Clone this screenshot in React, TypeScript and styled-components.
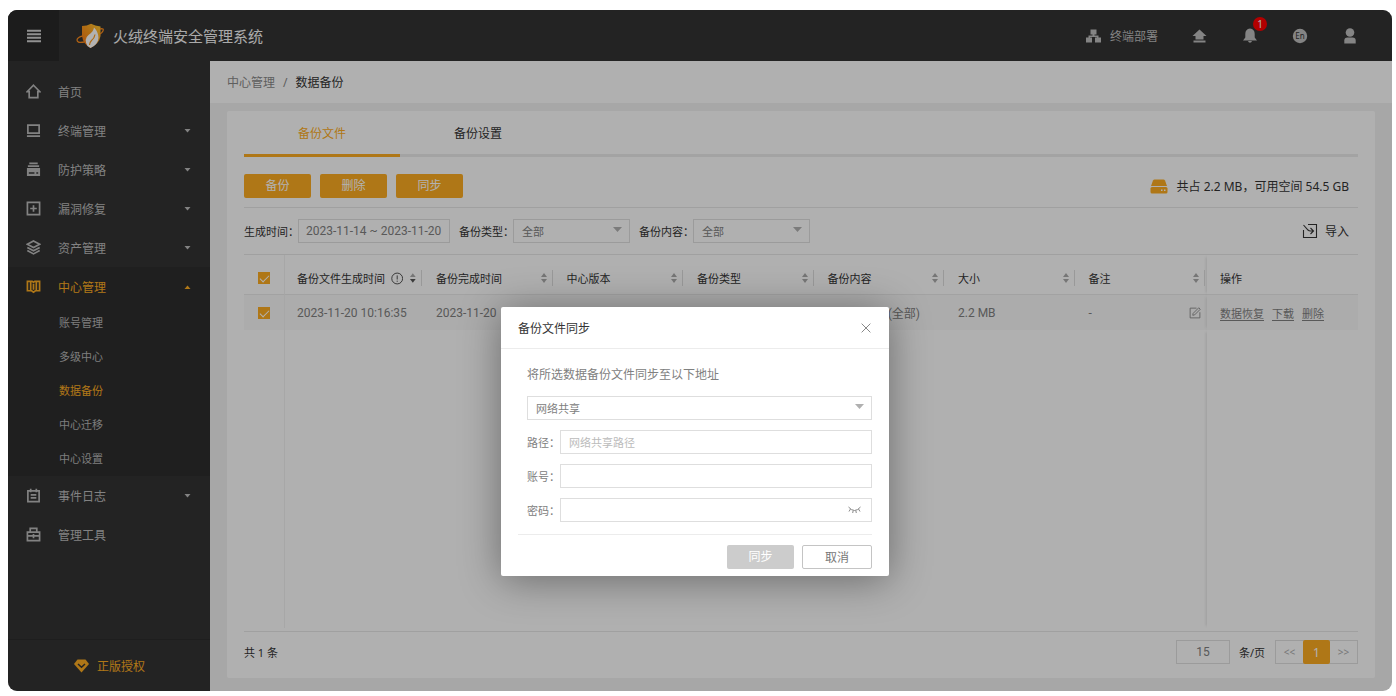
import React from "react";
import styled, { createGlobalStyle } from "styled-components";

const orange = "#fbab22";
const family = '"Noto Sans", "Noto Sans CJK SC", sans-serif';
const dataFamily = 'Roboto, "Noto Sans CJK SC", sans-serif';

const Global = createGlobalStyle`
  * { box-sizing: border-box; }
  body { margin: 0; background: #fff; font-family: ${family}; font-size: 12px; color: #333; }
  button, input, select { font-family: inherit; font-size: 12px; margin: 0; }
  button { cursor: pointer; }
  ul { list-style: none; margin: 0; padding: 0; }
`;

/* ---------- shell ---------- */
const Frame = styled.div`
  position: relative;
  display: flex;
  flex-direction: column;
  height: calc(100vh - 15px);
  min-height: 600px;
  margin: 10px 4px 5px 8px;
  border-radius: 9px;
  overflow: hidden;
  background: #f0f0f0;
`;
const Header = styled.header`
  display: flex;
  align-items: center;
  height: 51px;
  flex: none;
  background: #333;
  color: #c8c8c8;
`;
const MenuToggle = styled.button`
  width: 51px;
  height: 51px;
  border: 0;
  padding: 0;
  background: #292929;
  color: #d0d0d0;
  display: grid;
  place-items: center;
`;
const Brand = styled.div`
  display: flex;
  align-items: center;
  gap: 9px;
  margin-left: 17px;
  flex: 1;
  font-size: 15px;
  color: #f4f4f4;
`;
const HeaderActions = styled.nav`
  display: flex;
  align-items: center;
  gap: 34px;
  padding-right: 34px;
`;
const HeaderButton = styled.button`
  position: relative;
  display: flex;
  align-items: center;
  gap: 9px;
  min-width: 16px;
  border: 0;
  padding: 0;
  background: none;
  color: #bdbdbd;
`;
const Badge = styled.span`
  position: absolute;
  left: 11px;
  top: -11px;
  width: 14px;
  height: 14px;
  border-radius: 7px;
  background: #ff0000;
  color: #fff;
  font-size: 10px;
  line-height: 14px;
  text-align: center;
`;
const Body = styled.div`
  display: flex;
  flex: 1;
  min-height: 0;
`;

/* ---------- sidebar ---------- */
const Sidebar = styled.aside`
  display: flex;
  flex-direction: column;
  width: 202px;
  flex: none;
  background: #333;
`;
const MenuList = styled.ul`
  flex: 1;
  && { padding-top: 11px; }
`;
const MenuGroup = styled.li<{ $open?: boolean }>`
  background: ${(p) => (p.$open ? "#2d2d2d" : "transparent")};
`;
const MenuButton = styled.button<{ $active?: boolean }>`
  display: flex;
  align-items: center;
  gap: 17px;
  width: 100%;
  height: 39px;
  border: 0;
  padding: 0 19px 0 18px;
  background: none;
  text-align: left;
  color: ${(p) => (p.$active ? orange : "#bbb")};
`;
const MenuLabel = styled.span`
  flex: 1;
`;
const SubLink = styled.a<{ $active?: boolean }>`
  display: block;
  height: 34px;
  line-height: 34px;
  padding-left: 51px;
  font-size: 11px;
  text-decoration: none;
  color: ${(p) => (p.$active ? orange : "#b4b4b4")};
`;
const License = styled.button`
  display: flex;
  align-items: center;
  gap: 8px;
  height: 52px;
  border: 0;
  border-top: 1px solid #2b2b2b;
  padding: 0 0 0 66px;
  background: none;
  color: ${orange};
`;

/* ---------- content ---------- */
const Main = styled.main`
  display: flex;
  flex-direction: column;
  flex: 1;
  min-width: 0;
`;
const Crumbs = styled.nav`
  display: flex;
  align-items: center;
  gap: 8px;
  height: 42px;
  padding-left: 17px;
  background: #fdfdfd;
  color: #888;
`;
const CrumbLink = styled.a`
  color: inherit;
  text-decoration: none;
`;
const Current = styled.span`
  color: #333;
`;
const Card = styled.section`
  display: flex;
  flex-direction: column;
  flex: 1;
  min-height: 0;
  margin: 8px 17px 13px;
  padding: 0 17px;
  border-radius: 2px;
  background: #fdfdfd;
`;
const Tabs = styled.div`
  display: flex;
  height: 46px;
  flex: none;
  box-shadow: inset 0 -3px #eaeaea;
`;
const Tab = styled.button<{ $active?: boolean }>`
  width: 156px;
  border: 0;
  border-bottom: 3px solid ${(p) => (p.$active ? orange : "transparent")};
  padding: 0;
  background: none;
  color: ${(p) => (p.$active ? orange : "#333")};
`;
const Toolbar = styled.div`
  display: flex;
  align-items: center;
  gap: 9px;
  padding: 17px 9px 9px 0;
  border-bottom: 1px solid #e6e6e6;
`;
const Button = styled.button<{ $kind?: "plain" | "muted" }>`
  width: ${(p) => (p.$kind === "plain" ? 70 : 67)}px;
  height: 24px;
  border: ${(p) => (p.$kind === "plain" ? "1px solid #c4c4c4" : "0")};
  border-radius: 2px;
  padding: 0;
  line-height: 24px;
  background: ${(p) => (p.$kind === "plain" ? "#fff" : p.$kind === "muted" ? "#ccc" : orange)};
  color: ${(p) => (p.$kind === "plain" ? "#777" : "#fff")};
`;
const Usage = styled.div`
  display: flex;
  align-items: center;
  gap: 9px;
  margin-left: auto;
`;
const Filters = styled.div`
  display: flex;
  align-items: center;
  height: 47px;
  flex: none;
  padding-right: 9px;
  border-bottom: 1px solid #e6e6e6;
`;
const FilterLabel = styled.label`
  width: 54px;
  font-size: 11px;
  white-space: nowrap;
`;
const TextBox = styled.input`
  width: 100%;
  height: 24px;
  border: 1px solid #dedede;
  border-radius: 0;
  padding: 0 8px;
  background: transparent;
  color: #808080;
  outline: 0;
  &::placeholder { color: #bbb; font-size: 11px; }
`;
const DateBox = styled(TextBox)`
  width: 152px;
  padding: 0 7px;
  margin-right: 9px;
  font-family: ${dataFamily};
`;
const SelectWrap = styled.div<{ $width?: number }>`
  position: relative;
  width: ${(p) => (p.$width ? p.$width + "px" : "100%")};
  margin-right: ${(p) => (p.$width ? 9 : 0)}px;
  svg {
    position: absolute;
    right: 8px;
    top: 8px;
    pointer-events: none;
  }
`;
const Select = styled.select`
  appearance: none;
  display: block;
  width: 100%;
  height: 24px;
  border: 1px solid #dedede;
  border-radius: 0;
  padding: 0 8px;
  background: transparent;
  color: #808080;
  font-size: 11px;
  outline: 0;
`;
const ImportButton = styled.button`
  display: flex;
  align-items: center;
  gap: 7px;
  margin-left: auto;
  border: 0;
  padding: 0;
  background: none;
  color: #333;
`;

/* ---------- table ---------- */
const TableArea = styled.div`
  flex: 1 1 0;
  min-height: 0;
  padding-bottom: 3px;
`;
const Table = styled.table`
  width: 100%;
  height: 100%;
  table-layout: fixed;
  border-collapse: separate;
  border-spacing: 0;
  text-align: left;
  th, td { padding: 0 0 0 12px; font-weight: 400; }
  th:first-child, td:first-child { padding-left: 14px; border-right: 1px solid #f0f0f0; }
  th:last-child, td:last-child { padding-left: 13px; box-shadow: -3px 0 3px -2px #e0e0e0; }
`;
const HeadRow = styled.tr`
  height: 40px;
  font-size: 11px;
  && th { padding-top: 7px; border-bottom: 1px solid #e8e8e8; }
`;
const DataRow = styled.tr`
  height: 35px;
  color: #808080;
  font-family: ${dataFamily};
  td { background: #f7f7f7; white-space: nowrap; }
`;
const HeadCell = styled.div`
  display: flex;
  align-items: center;
  gap: 6px;
  height: 16px;
  margin-right: 2px;
  padding-right: 4px;
  border-right: 1px solid #dcdcdc;
  white-space: nowrap;
  svg:last-child { margin-left: auto; }
`;
const Check = styled.input`
  appearance: none;
  display: block;
  width: 12px;
  height: 12px;
  background: ${orange};
  &::after {
    content: "";
    display: block;
    width: 8px;
    height: 4px;
    margin: 3px 2px;
    border: solid #fff;
    border-width: 0 0 1px 1px;
    transform: rotate(-45deg);
  }
`;
const RemarkCell = styled.div`
  display: flex;
  align-items: center;
  justify-content: space-between;
  padding-right: 6px;
`;
const EndText = styled.div`
  text-align: right;
  padding-right: 26px;
`;
const IconButton = styled.button`
  display: block;
  border: 0;
  padding: 0;
  background: none;
  color: #888;
  line-height: 0;
`;
const RowLinks = styled.div`
  display: flex;
  gap: 8px;
  font-size: 11px;
  a { color: #808080; text-underline-offset: 2px; }
`;
const Footer = styled.footer`
  display: flex;
  align-items: center;
  height: 47px;
  flex: none;
  padding: 0 0 6px;
  border-top: 1px solid #e6e6e6;
  font-size: 11px;
`;
const PageSize = styled.label`
  display: flex;
  align-items: center;
  gap: 9px;
  margin-left: auto;
  margin-right: 10px;
`;
const SizeInput = styled(TextBox)`
  width: 54px;
  text-align: center;
  font-family: ${dataFamily};
`;
const Pager = styled.div`
  display: flex;
  height: 24px;
  border: 1px solid #dedede;
`;
const PageButton = styled.button<{ $active?: boolean }>`
  width: 27px;
  height: 24px;
  margin-top: -1px;
  border: 0;
  border-radius: ${(p) => (p.$active ? 2 : 0)}px;
  padding: 0;
  background: ${(p) => (p.$active ? orange : "transparent")};
  color: ${(p) => (p.$active ? "#fff" : "#aaa")};
  font-size: ${(p) => (p.$active ? 12 : 10)}px;
`;

/* ---------- dialog ---------- */
const Overlay = styled.div`
  position: absolute;
  inset: 0;
  display: flex;
  justify-content: center;
  align-items: flex-end;
  padding: 0 10px 115px 0;
  background: rgba(0, 0, 0, 0.3);
`;
const Dialog = styled.form`
  width: 388px;
  border-radius: 2px;
  background: #fff;
  box-shadow: 0 4px 40px rgba(0, 0, 0, 0.4);
`;
const DialogHead = styled.div`
  display: flex;
  align-items: center;
  justify-content: space-between;
  height: 42px;
  padding: 0 18px 0 17px;
  border-bottom: 1px solid #ececec;
`;
const DialogTitle = styled.h2`
  margin: 0;
  font-size: 12px;
  font-weight: 400;
`;
const DialogBody = styled.div`
  display: flex;
  flex-direction: column;
  gap: 10px;
  padding: 16px 17px 12px 26px;
  color: #808080;
`;
const Hint = styled.label`
  line-height: 20px;
  padding-bottom: 1px;
`;
const Field = styled.div`
  display: grid;
  grid-template-columns: 33px 1fr;
  align-items: center;
`;
const FieldLabel = styled.label`
  font-size: 11px;
`;
const PasswordWrap = styled.div`
  position: relative;
`;
const Eye = styled(IconButton)`
  position: absolute;
  right: 11px;
  top: 8px;
`;
const DialogFoot = styled.div`
  display: flex;
  justify-content: flex-end;
  gap: 8px;
  margin: 0 17px;
  padding: 10px 0 7px;
  border-top: 1px solid #ececec;
`;

/* ---------- icons ---------- */
const Line = ({ children, size = 15, w = 1.8 }: { children: React.ReactNode; size?: number; w?: number }) => (
  <svg width={size} height={size} viewBox="0 0 16 16" fill="none" stroke="currentColor" strokeWidth={w} aria-hidden="true">
    {children}
  </svg>
);

const menuIcons: Record<string, React.ReactNode> = {
  home: <path d="M8 1.300 L14.800 8.200 H12.600 V14.600 H3.400 V8.200 H1.200 Z" />,
  screen: <path d="M2 2.300 H14 V10.700 H2 Z M1 14 H15" />,
  policy: (
    <>
      <path d="M3.500 1.500 H12.500 M2 4.300 H14" />
      <path d="M1 6.500 H15 V14.800 H1 Z M3 11 V12.600 H9 V11 Z M11 11 V12.600 H13 V11 Z" fill="currentColor" fillRule="evenodd" stroke="none" />
    </>
  ),
  patch: <path d="M1.500 1.500 H14.500 V14.500 H1.500 Z M8 4.500 V11.500 M4.500 8 H11.500" />,
  layers: <path d="M8 1 L14.600 4.500 L8 8 L1.400 4.500 Z M1.400 8 L8 11.500 L14.600 8 M1.400 11.300 L8 14.800 L14.600 11.300" />,
  book: <path d="M1.500 2.500 H6.500 L8 3.500 L9.500 2.500 H14.500 V12.500 H10 L8 14 L6 12.500 H1.500 Z M8 5 V11.500 M5 2.500 V12.500 M11 2.500 V12.500" />,
  log: <path d="M2 3 H14 V14.500 H2 Z M5 0.800 V4.500 M11 0.800 V4.500 M5 7.300 H11 M5 10.500 H11" />,
  tools: <path d="M1.500 5.500 H14.500 V14.500 H1.500 Z M4.500 5 V1.500 H11.500 V5 M1.500 9.500 H14.500 M8 7.500 V12" />,
};

const Caret = ({ up }: { up?: boolean }) => (
  <svg width="7" height="4" viewBox="0 0 7 4" aria-hidden="true">
    <path d={up ? "M0.500 4 L3.500 0.500 L6.500 4Z" : "M0.500 0 L3.500 3.500 L6.500 0Z"} fill="currentColor" />
  </svg>
);
const SelectArrow = () => (
  <svg width="9" height="5" viewBox="0 0 9 5" aria-hidden="true">
    <path d="M0 0 H9 L4.500 5Z" fill="#b0b0b0" />
  </svg>
);
const Sort = ({ down }: { down?: boolean }) => (
  <svg width="8" height="12" viewBox="0 0 8 12" aria-hidden="true">
    <path d="M1 5 L4 1 L7 5Z" fill="#aaa" />
    <path d="M1 7 L4 11 L7 7Z" fill={down ? "#555" : "#aaa"} />
  </svg>
);
const Logo = () => (
  <svg width="28" height="26" viewBox="0 0 28 26" aria-hidden="true">
    <defs>
      <linearGradient id="shield" x1="0" y1="1" x2="1" y2="0">
        <stop offset="0" stopColor="#f4711a" />
        <stop offset="0.500" stopColor="#fd9b1c" />
        <stop offset="1" stopColor="#ffcc33" />
      </linearGradient>
    </defs>
    <path d="M6 3 Q11 3 15 0.800 Q19 3 24.500 3.500 V13 Q23.500 20.500 14.500 25 Q7 21 6 13 Z" fill="url(#shield)" />
    <path d="M7 12.800 Q1.200 14.200 1 17 Q1 20.500 8.500 19 M24 6 Q28.500 5 26.800 8.200 Q26.200 9.500 24 11" fill="none" stroke="#f98a1c" strokeWidth="1.300" />
    <path d="M18 4.500 Q17.500 8.500 12.500 12 Q7.500 16 11.500 23 L14.500 25 Q22 21.500 22.500 15 Q22.500 9 18 4.500Z" fill="#fff" />
    <path d="M19 11.500 Q18.500 15 15.500 17.500 Q13.500 19.500 13.500 22" fill="none" stroke="#fd9b1c" strokeWidth="1.200" />
  </svg>
);

type MenuItem = { label: string; icon: string; caret?: boolean; children?: string[] };
const menu: MenuItem[] = [
  { label: "首页", icon: "home" },
  { label: "终端管理", icon: "screen", caret: true },
  { label: "防护策略", icon: "policy", caret: true },
  { label: "漏洞修复", icon: "patch", caret: true },
  { label: "资产管理", icon: "layers", caret: true },
  { label: "中心管理", icon: "book", caret: true, children: ["账号管理", "多级中心", "数据备份", "中心迁移", "中心设置"] },
  { label: "事件日志", icon: "log", caret: true },
  { label: "管理工具", icon: "tools" },
];
const columns = ["备份完成时间", "中心版本", "备份类型", "备份内容", "大小", "备注"];

export default function App() {
  return (
    <>
      <Global />
      <Frame>
        <Header>
          <MenuToggle aria-label="菜单">
            <Line size={14} w={2.4}><path d="M0 2 H16 M0 6 H16 M0 10 H16 M0 14 H16" /></Line>
          </MenuToggle>
          <Brand><Logo />火绒终端安全管理系统</Brand>
          <HeaderActions>
            <HeaderButton>
              <svg width="15" height="14" viewBox="0 0 15 14" fill="currentColor" aria-hidden="true">
                <path d="M4.500 0.500 H10.500 V5.500 H8.500 V6.500 H12.500 V8.500 H15 V13.500 H9 V8.500 H10.800 V8 H4.200 V8.500 H6 V13.500 H0 V8.500 H2.500 V6.500 H6.500 V5.500 H4.500Z" />
              </svg>
              终端部署
            </HeaderButton>
            <HeaderButton aria-label="升级">
              <svg width="15" height="14" viewBox="0 0 15 14" fill="currentColor" aria-hidden="true">
                <path d="M7.500 0.500 L14.500 7 H11.500 V10.500 H3.500 V7 H0.500Z M1.500 11.500 H13.500 V13.500 H1.500Z" />
              </svg>
            </HeaderButton>
            <HeaderButton aria-label="通知">
              <svg width="16" height="15" viewBox="0 0 16 15" fill="currentColor" aria-hidden="true">
                <path d="M8 0.500 Q12.700 1 12.700 6 V9.500 L15 12.500 H1 L3.300 9.500 V6 Q3.300 1 8 0.500Z M6 13 H10 Q9.500 14.800 8 14.800 Q6.500 14.800 6 13Z" />
              </svg>
              <Badge>1</Badge>
            </HeaderButton>
            <HeaderButton aria-label="语言">
              <svg width="16" height="16" viewBox="0 0 16 16" aria-hidden="true">
                <circle cx="8" cy="8" r="7.200" fill="currentColor" />
                <text x="8" y="11" textAnchor="middle" fontSize="8" fill="#333">En</text>
              </svg>
            </HeaderButton>
            <HeaderButton aria-label="用户">
              <svg width="16" height="16" viewBox="0 0 16 16" fill="currentColor" aria-hidden="true">
                <circle cx="8" cy="4.500" r="4.300" />
                <path d="M2.300 15.500 V12.500 Q2.300 9.500 5.500 9.500 H10.500 Q13.700 9.500 13.700 12.500 V15.500Z" />
              </svg>
            </HeaderButton>
          </HeaderActions>
        </Header>
        <Body>
          <Sidebar>
            <MenuList>
              {menu.map((m) => (
                <MenuGroup key={m.label} $open={!!m.children}>
                  <MenuButton $active={!!m.children}>
                    <Line>{menuIcons[m.icon]}</Line>
                    <MenuLabel>{m.label}</MenuLabel>
                    {m.caret && <Caret up={!!m.children} />}
                  </MenuButton>
                  {m.children && (
                    <ul>
                      {m.children.map((c) => (
                        <li key={c}><SubLink href="#" $active={c === "数据备份"}>{c}</SubLink></li>
                      ))}
                    </ul>
                  )}
                </MenuGroup>
              ))}
            </MenuList>
            <License>
              <svg width="15" height="14" viewBox="0 0 15 14" aria-hidden="true">
                <path d="M3.500 0.500 H11.500 L15 5 L7.500 13.500 L0 5Z" fill="currentColor" />
                <path d="M4 5 L7.500 8.300 L11 5" fill="none" stroke="#333" strokeWidth="1.500" />
              </svg>
              正版授权
            </License>
          </Sidebar>
          <Main>
            <Crumbs>
              <CrumbLink href="#">中心管理</CrumbLink>
              <span>/</span>
              <Current>数据备份</Current>
            </Crumbs>
            <Card>
              <Tabs role="tablist">
                <Tab role="tab" aria-selected="true" $active>备份文件</Tab>
                <Tab role="tab" aria-selected="false">备份设置</Tab>
              </Tabs>
              <Toolbar>
                <Button>备份</Button>
                <Button>删除</Button>
                <Button>同步</Button>
                <Usage>
                  <svg width="18" height="15" viewBox="0 0 18 15" aria-hidden="true">
                    <path d="M4.500 0.500 H13.500 Q14.500 0.500 15 1.500 L17 7 H1 L3 1.500 Q3.500 0.500 4.500 0.500Z" fill={orange} />
                    <rect x="0.500" y="8" width="17" height="6.500" rx="1.500" fill={orange} />
                    <path d="M11 10.500 H12.500 V12 H11Z M14 10.500 H15.500 V12 H14Z" fill="#fff" />
                  </svg>
                  共占 2.2 MB，可用空间 54.5 GB
                </Usage>
              </Toolbar>
              <Filters>
                <FilterLabel htmlFor="created">生成时间：</FilterLabel>
                <DateBox id="created" defaultValue="2023-11-14 ~ 2023-11-20" />
                <FilterLabel htmlFor="kind">备份类型：</FilterLabel>
                <SelectWrap $width={117}>
                  <Select id="kind"><option>全部</option></Select>
                  <SelectArrow />
                </SelectWrap>
                <FilterLabel htmlFor="content">备份内容：</FilterLabel>
                <SelectWrap $width={117}>
                  <Select id="content"><option>全部</option></Select>
                  <SelectArrow />
                </SelectWrap>
                <ImportButton>
                  <Line size={16} w={1.1}>
                    <path d="M6 1.500 H14.500 V14.500 H1.500 V7 M1.500 2 L6 7 Q7 8 8.500 8 H11 M8.500 5 L11.500 8 L8.500 11" />
                  </Line>
                  导入
                </ImportButton>
              </Filters>
              <TableArea>
                <Table>
                  <colgroup>
                    <col style={{ width: 41 }} />
                    <col style={{ width: 139 }} />
                    {columns.map((c) => <col key={c} />)}
                    <col style={{ width: 151 }} />
                  </colgroup>
                  <thead>
                    <HeadRow>
                      <th><Check type="checkbox" defaultChecked aria-label="全选" /></th>
                      <th>
                        <HeadCell>
                          备份文件生成时间
                          <Line size={13} w={1.1}><circle cx="8" cy="8" r="7" /><path d="M8 4 V9.300 M8 10.800 V12.300" /></Line>
                          <Sort down />
                        </HeadCell>
                      </th>
                      {columns.map((c) => (
                        <th key={c}><HeadCell>{c}<Sort /></HeadCell></th>
                      ))}
                      <th>操作</th>
                    </HeadRow>
                  </thead>
                  <tbody>
                    <DataRow>
                      <td><Check type="checkbox" defaultChecked aria-label="选择" /></td>
                      <td>2023-11-20 10:16:35</td>
                      <td>2023-11-20</td>
                      <td />
                      <td />
                      <td><EndText>(全部)</EndText></td>
                      <td>2.2 MB</td>
                      <td>
                        <RemarkCell>
                          -
                          <IconButton aria-label="编辑">
                            <Line size={12} w={1.2}><path d="M10 1.500 H1.500 V14.500 H14.500 V7 M5 11 L5.500 8.500 L13 1 L15 3 L7.500 10.500Z" /></Line>
                          </IconButton>
                        </RemarkCell>
                      </td>
                      <td>
                        <RowLinks><a href="#">数据恢复</a><a href="#">下载</a><a href="#">删除</a></RowLinks>
                      </td>
                    </DataRow>
                    <tr aria-hidden="true">
                      <td /><td colSpan={7} /><td />
                    </tr>
                  </tbody>
                </Table>
              </TableArea>
              <Footer>
                <span>共 1 条</span>
                <PageSize><SizeInput defaultValue="15" />条/页</PageSize>
                <Pager>
                  <PageButton aria-label="上一页">&lt;&lt;</PageButton>
                  <PageButton $active>1</PageButton>
                  <PageButton aria-label="下一页">&gt;&gt;</PageButton>
                </Pager>
              </Footer>
            </Card>
          </Main>
        </Body>
        <Overlay>
          <Dialog role="dialog" aria-labelledby="sync-title" onSubmit={(e) => e.preventDefault()}>
            <DialogHead>
              <DialogTitle id="sync-title">备份文件同步</DialogTitle>
              <IconButton type="button" aria-label="关闭">
                <Line size={10} w={1.6}><path d="M1 1 L15 15 M15 1 L1 15" /></Line>
              </IconButton>
            </DialogHead>
            <DialogBody>
              <Hint htmlFor="target">将所选数据备份文件同步至以下地址</Hint>
              <SelectWrap>
                <Select id="target"><option>网络共享</option></Select>
                <SelectArrow />
              </SelectWrap>
              <Field>
                <FieldLabel htmlFor="path">路径：</FieldLabel>
                <TextBox id="path" placeholder="网络共享路径" />
              </Field>
              <Field>
                <FieldLabel htmlFor="account">账号：</FieldLabel>
                <TextBox id="account" />
              </Field>
              <Field>
                <FieldLabel htmlFor="password">密码：</FieldLabel>
                <PasswordWrap>
                  <TextBox id="password" type="password" />
                  <Eye type="button" aria-label="显示密码">
                    <svg width="13" height="8" viewBox="0 0 13 8" fill="none" stroke="currentColor" aria-hidden="true">
                      <path d="M0.500 1 Q6.500 8 12.500 1 M2.500 3 L1 5.500 M5.200 4.500 L4.700 7 M7.800 4.500 L8.300 7 M10.500 3 L12 5.500" />
                    </svg>
                  </Eye>
                </PasswordWrap>
              </Field>
            </DialogBody>
            <DialogFoot>
              <Button type="submit" $kind="muted">同步</Button>
              <Button type="button" $kind="plain">取消</Button>
            </DialogFoot>
          </Dialog>
        </Overlay>
      </Frame>
    </>
  );
}
